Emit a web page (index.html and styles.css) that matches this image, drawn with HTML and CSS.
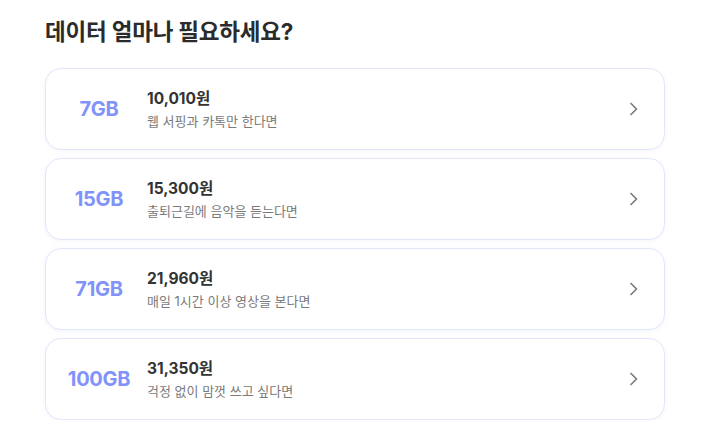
FILE: index.html
```html
<!DOCTYPE html>
<html lang="ko">
<head>
    <meta charset="UTF-8">
    <meta name="viewport" content="width=device-width, initial-scale=1.0">
    <title>데이터 요금제</title>
    <link rel="stylesheet" href="styles.css">
</head>
<body>
    <main class="page">
        <h2 class="title">데이터 얼마나 필요하세요?</h2>
        <ul class="plans">
            <li class="plan">
                <span class="amount">7GB</span>
                <div class="info">
                    <span class="price">10,010원</span>
                    <span class="desc">웹 서핑과 카톡만 한다면</span>
                </div>
                <svg class="chevron" width="16" height="16" viewBox="0 0 16 16"><path d="M5 2.5 L10.5 8 L5 13.5" fill="none" stroke="currentColor" stroke-width="1.7" stroke-linecap="round" stroke-linejoin="round"/></svg>
            </li>
            <li class="plan">
                <span class="amount">15GB</span>
                <div class="info">
                    <span class="price">15,300원</span>
                    <span class="desc">출퇴근길에 음악을 듣는다면</span>
                </div>
                <svg class="chevron" width="16" height="16" viewBox="0 0 16 16"><path d="M5 2.5 L10.5 8 L5 13.5" fill="none" stroke="currentColor" stroke-width="1.7" stroke-linecap="round" stroke-linejoin="round"/></svg>
            </li>
            <li class="plan">
                <span class="amount">71GB</span>
                <div class="info">
                    <span class="price">21,960원</span>
                    <span class="desc">매일 1시간 이상 영상을 본다면</span>
                </div>
                <svg class="chevron" width="16" height="16" viewBox="0 0 16 16"><path d="M5 2.5 L10.5 8 L5 13.5" fill="none" stroke="currentColor" stroke-width="1.7" stroke-linecap="round" stroke-linejoin="round"/></svg>
            </li>
            <li class="plan">
                <span class="amount">100GB</span>
                <div class="info">
                    <span class="price">31,350원</span>
                    <span class="desc">걱정 없이 맘껏 쓰고 싶다면</span>
                </div>
                <svg class="chevron" width="16" height="16" viewBox="0 0 16 16"><path d="M5 2.5 L10.5 8 L5 13.5" fill="none" stroke="currentColor" stroke-width="1.7" stroke-linecap="round" stroke-linejoin="round"/></svg>
            </li>
        </ul>
    </main>
</body>
</html>
```

FILE: styles.css
```css
body {
    margin: 0;
    background: #fff;
    font-family: "Inter", "Noto Sans CJK KR", sans-serif;
    color: #333;
}
.page {
    width: 620px;
    padding: 16px 0 0 45px;
}
.title {
    margin: 0 0 20px;
    font-size: 22.5px;
    font-weight: 700;
    line-height: 32px;
    color: #2b2b2b;
    letter-spacing: -0.2px;
}
.plans {
    list-style: none;
    margin: 0;
    padding: 0;
    display: flex;
    flex-direction: column;
    gap: 8px;
}
.plan {
    height: 80px;
    display: flex;
    align-items: center;
    padding: 0 22px 0 16px;
    border: 1px solid #e2e6fa;
    border-radius: 16px;
    box-shadow: 0 1px 4px rgba(120, 130, 200, 0.08);
    background: #fff;
}
.amount {
    width: 74px;
    text-align: center;
    font-size: 20px;
    font-weight: 700;
    color: #8193fb;
    letter-spacing: -0.3px;
}
.info {
    flex: 1;
    display: flex;
    flex-direction: column;
    gap: 3px;
    margin-left: 11px;
}
.price {
    font-size: 15.5px;
    font-weight: 700;
    color: #333;
    line-height: 20px;
}
.desc {
    font-size: 13px;
    color: #7a7a7a;
    line-height: 18px;
}
.chevron {
    color: #7c7c7c;
}
```
